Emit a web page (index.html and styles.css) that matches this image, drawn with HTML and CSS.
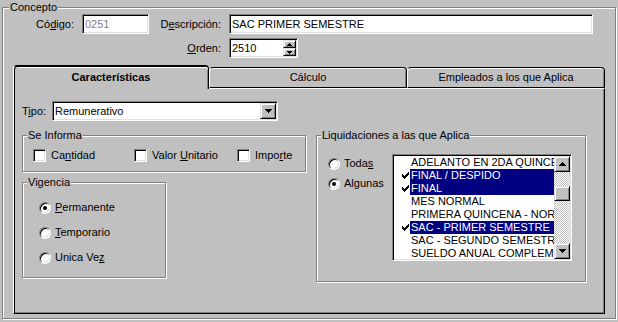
FILE: index.html
```html
<!DOCTYPE html>
<html lang="es">
<head>
    <meta charset="UTF-8">
    <title>Concepto</title>
    <link rel="stylesheet" href="styles.css">
</head>
<body>
    <svg class="defs" width="0" height="0">
        <symbol id="arrow-up" viewBox="0 0 7 4"><path d="M3 0h1v1h1v1h1v1h1v1H0V3h1V2h1V1h1z"/></symbol>
        <symbol id="arrow-down" viewBox="0 0 7 4"><path d="M0 0h7v1h-1v1h-1v1h-1v1h-1V3h-1V2h-1V1H0z"/></symbol>
        <symbol id="spin-up" viewBox="0 0 5 3"><path d="M2 0h1v1h1v1h1v1H0V2h1V1h1z"/></symbol>
        <symbol id="spin-down" viewBox="0 0 5 3"><path d="M0 0h5v1h-1v1h-1v1h-1V2h-1V1H0z"/></symbol>
        <symbol id="tick" viewBox="0 0 7 7"><path d="M6 0h1v1h-1zM5 1h2v1h-2zM0 2h1v1h-1zM4 2h3v1h-3zM0 3h2v1h-2zM3 3h3v1h-3zM0 4h5v1h-5zM1 5h3v1h-3zM2 6h1v1h-1z"/></symbol>
    </svg>

    <fieldset class="group concepto">
        <legend>Concepto</legend>

        <div class="head">
            <label class="lbl">Có<u>d</u>igo:</label>
            <div class="field field-code">0251</div>
            <label class="lbl">D<u>e</u>scripción:</label>
            <div class="field">SAC PRIMER SEMESTRE</div>
            <label class="lbl lbl-orden"><u>O</u>rden:</label>
            <div class="field field-spin">
                <span class="spin-value">2510</span>
                <span class="spin">
                    <span class="btn"><svg width="5" height="3"><use href="#spin-up"/></svg></span>
                    <span class="btn"><svg width="5" height="3"><use href="#spin-down"/></svg></span>
                </span>
            </div>
        </div>

        <div class="tabs">
            <div class="tab-strip">
                <div class="tab active">Características</div>
                <div class="tab">Cálculo</div>
                <div class="tab">Empleados a los que Aplica</div>
            </div>

            <div class="tab-panel">
                <div class="tipo">
                    <label class="tipo-lbl">T<u>i</u>po:</label>
                    <div class="field combo">
                        <span class="combo-text">Remunerativo</span>
                        <span class="btn"><svg width="7" height="4"><use href="#arrow-down"/></svg></span>
                    </div>
                </div>

                <div class="cols">
                    <div class="col-left">
                        <fieldset class="group se-informa">
                            <legend>Se Informa</legend>
                            <div class="check-row">
                                <div class="check-item"><span class="checkbox"></span><span>Ca<u>n</u>tidad</span></div>
                                <div class="check-item"><span class="checkbox"></span><span>Valor <u>U</u>nitario</span></div>
                                <div class="check-item"><span class="checkbox"></span><span>Impo<u>r</u>te</span></div>
                            </div>
                        </fieldset>

                        <fieldset class="group vigencia">
                            <legend>Vigencia</legend>
                            <div class="radio-list">
                                <div class="radio-item"><span class="radio on"></span><span><u>P</u>ermanente</span></div>
                                <div class="radio-item"><span class="radio"></span><span><u>T</u>emporario</span></div>
                                <div class="radio-item"><span class="radio"></span><span>Unica Ve<u>z</u></span></div>
                            </div>
                        </fieldset>
                    </div>

                    <fieldset class="group liquidaciones">
                        <legend>Liquidaciones a las que Aplica</legend>
                        <div class="liq-body">
                            <div class="liq-radios">
                                <div class="radio-item"><span class="radio"></span><span>Toda<u>s</u></span></div>
                                <div class="radio-item"><span class="radio on"></span><span>Al<u>g</u>unas</span></div>
                            </div>

                            <div class="listbox">
                                <div class="list-items">
                                    <div class="list-item"><span class="list-check"></span><span class="list-text">ADELANTO EN 2DA QUINCENA</span></div>
                                    <div class="list-item sel"><span class="list-check"><svg width="7" height="7"><use href="#tick"/></svg></span><span class="list-text">FINAL / DESPIDO</span></div>
                                    <div class="list-item sel"><span class="list-check"><svg width="7" height="7"><use href="#tick"/></svg></span><span class="list-text">FINAL</span></div>
                                    <div class="list-item"><span class="list-check"></span><span class="list-text">MES NORMAL</span></div>
                                    <div class="list-item"><span class="list-check"></span><span class="list-text">PRIMERA QUINCENA - NORMAL</span></div>
                                    <div class="list-item sel"><span class="list-check"><svg width="7" height="7"><use href="#tick"/></svg></span><span class="list-text">SAC - PRIMER SEMESTRE</span></div>
                                    <div class="list-item"><span class="list-check"></span><span class="list-text">SAC - SEGUNDO SEMESTRE</span></div>
                                    <div class="list-item"><span class="list-check"></span><span class="list-text">SUELDO ANUAL COMPLEMENTARIO</span></div>
                                </div>
                                <div class="scrollbar">
                                    <span class="btn sb-btn"><svg width="7" height="4"><use href="#arrow-up"/></svg></span>
                                    <div class="sb-track"><span class="btn sb-thumb"></span></div>
                                    <span class="btn sb-btn"><svg width="7" height="4"><use href="#arrow-down"/></svg></span>
                                </div>
                            </div>
                        </div>
                    </fieldset>
                </div>
            </div>
        </div>
    </fieldset>
</body>
</html>
```

FILE: styles.css
```css
:root {
    --face: #c0c0c0;
    --shadow: #808080;
    --light: #dfdfdf;
    --white: #ffffff;
    --dark: #000000;
    --select: #000080;
}

* {
    box-sizing: border-box;
}

body {
    margin: 0;
    padding: 1px 0 0 2px;
    width: 618px;
    height: 322px;
    overflow: hidden;
    background: var(--face);
    color: var(--dark);
    font-family: "Liberation Sans", Arial, sans-serif;
    font-size: 11px;
    line-height: 13px;
}

u {
    text-decoration: underline;
    text-underline-offset: 1px;
}

.defs {
    position: absolute;
}

svg {
    display: block;
    fill: var(--dark);
    shape-rendering: crispEdges;
}

/* group boxes (etched) */
.group {
    margin: 0;
    padding: 0;
    min-width: 0;
    border: 1px solid var(--shadow);
    box-shadow: inset 1px 1px 0 var(--white), 1px 1px 0 var(--white);
}

.group legend {
    margin-left: 4px;
    padding: 0 1px;
    background: var(--face);
    line-height: 13px;
}

.concepto {
    width: 614px;
    height: 318px;
}

.concepto > legend {
    margin-left: 6px;
}

/* sunken fields */
.field {
    height: 20px;
    padding: 2px 2px;
    background: var(--white);
    border: 1px solid;
    border-color: var(--shadow) var(--white) var(--white) var(--shadow);
    box-shadow: inset 1px 1px 0 var(--dark), inset -1px -1px 0 var(--light);
    line-height: 14px;
    white-space: nowrap;
    overflow: hidden;
}

.field-code {
    color: var(--shadow);
}

/* raised buttons */
.btn {
    display: flex;
    align-items: center;
    justify-content: center;
    background: var(--face);
    border: 1px solid;
    border-color: var(--light) var(--dark) var(--dark) var(--light);
    box-shadow: inset 1px 1px 0 var(--white), inset -1px -1px 0 var(--shadow);
}

/* header rows */
.head {
    display: grid;
    grid-template-columns: 79px 67px 80px 364px;
    grid-template-rows: 20px 20px;
    row-gap: 4px;
    align-items: center;
}

.lbl {
    text-align: right;
    padding-right: 8px;
}

.lbl-orden {
    grid-column: 3;
    grid-row: 2;
}

.field-spin {
    grid-column: 4;
    grid-row: 2;
    width: 69px;
    display: flex;
    padding: 1px;
}

.spin-value {
    flex: 1;
    padding: 1px 1px;
    line-height: 14px;
}

.spin {
    width: 13px;
    display: flex;
    flex-direction: column;
}

.spin .btn {
    height: 8px;
}

/* tabs */
.tabs {
    margin: 7px 0 0 10px;
    width: 592px;
}

.tab-strip {
    display: flex;
    align-items: flex-end;
    height: 23px;
}

.tab {
    width: 198px;
    height: 21px;
    border: 1px solid var(--dark);
    border-left-color: var(--white);
    border-radius: 4px 4px 0 0;
    box-shadow: inset 0 1px 0 var(--white), inset -1px 0 0 var(--shadow);
    text-align: center;
    line-height: 19px;
}

.tab.active {
    position: relative;
    z-index: 1;
    width: 196px;
    height: 24px;
    margin-bottom: -1px;
    border-bottom: none;
    background: var(--face);
    box-shadow: inset 1px 1px 0 var(--dark), inset 0 2px 0 var(--white), inset -1px 0 0 var(--shadow);
    font-weight: bold;
    line-height: 22px;
}

.tab-panel {
    height: 226px;
    padding: 12px 0 0 8px;
    border: 1px solid var(--dark);
    border-top-color: var(--white);
    border-left-color: var(--white);
    box-shadow: inset 1px 0 0 var(--dark), inset -1px -1px 0 var(--shadow);
}

.tipo {
    display: flex;
    align-items: center;
    height: 20px;
}

.tipo-lbl {
    width: 30px;
}

.combo {
    width: 226px;
    display: flex;
    padding: 0;
}

.combo-text {
    flex: 1;
    padding: 2px 2px;
    line-height: 14px;
}

.combo .btn {
    width: 16px;
    height: 16px;
    margin: 1px 1px 1px 0;
}

.cols {
    display: flex;
    gap: 10px;
    margin-top: 8px;
}

.col-left {
    display: flex;
    flex-direction: column;
    gap: 4px;
}

.se-informa {
    width: 284px;
    height: 43px;
}

.check-row {
    display: flex;
    padding: 7px 0 0 10px;
}

.check-item {
    display: flex;
    align-items: center;
    gap: 5px;
    height: 13px;
}

.check-item:nth-child(1) {
    width: 101px;
}

.check-item:nth-child(2) {
    width: 103px;
}

.checkbox {
    width: 13px;
    height: 13px;
    background: var(--white);
    border: 1px solid;
    border-color: var(--shadow) var(--white) var(--white) var(--shadow);
    box-shadow: inset 1px 1px 0 var(--dark), inset -1px -1px 0 var(--light);
}

.vigencia {
    width: 144px;
    height: 102px;
}

.radio-list {
    display: flex;
    flex-direction: column;
    gap: 12px;
    padding: 12px 0 0 16px;
}

.radio-item {
    display: flex;
    align-items: center;
    gap: 4px;
    height: 13px;
}

.radio {
    width: 12px;
    height: 12px;
    display: flex;
    align-items: center;
    justify-content: center;
    border-radius: 50%;
    background: var(--white);
    border: 1px solid;
    border-color: var(--shadow) var(--white) var(--white) var(--shadow);
    box-shadow: inset 1px 1px 0 var(--dark), inset -1px -1px 0 var(--light);
}

.radio.on::after {
    content: "";
    width: 4px;
    height: 4px;
    border-radius: 50%;
    background: var(--dark);
}

.liquidaciones {
    width: 270px;
    height: 153px;
}

.liq-body {
    display: flex;
    padding-left: 11px;
}

.liq-radios {
    width: 64px;
    padding-top: 15px;
    display: flex;
    flex-direction: column;
    gap: 7px;
}

/* list with checks */
.listbox {
    width: 180px;
    height: 107px;
    margin-top: 12px;
    padding: 1px;
    display: flex;
    background: var(--white);
    border: 1px solid;
    border-color: var(--shadow) var(--white) var(--white) var(--shadow);
    box-shadow: inset 1px 1px 0 var(--dark), inset -1px -1px 0 var(--light);
}

.list-items {
    flex: 1;
    min-width: 0;
    overflow: hidden;
}

.list-item {
    display: flex;
    height: 13px;
}

.list-check {
    flex: none;
    width: 16px;
    display: flex;
    align-items: center;
    padding-left: 8px;
}

.list-text {
    flex: 1;
    min-width: 0;
    padding-left: 1px;
    overflow: hidden;
    white-space: nowrap;
    line-height: 13px;
}

.list-item.sel .list-text {
    background: var(--select);
    color: var(--white);
}

.scrollbar {
    flex: none;
    width: 16px;
    display: flex;
    flex-direction: column;
}

.sb-btn {
    height: 16px;
}

.sb-track {
    flex: 1;
    background: repeating-conic-gradient(var(--white) 0 25%, var(--face) 0 50%) 0 0 / 2px 2px;
}

.sb-thumb {
    height: 15px;
    margin-top: 14px;
}
```
